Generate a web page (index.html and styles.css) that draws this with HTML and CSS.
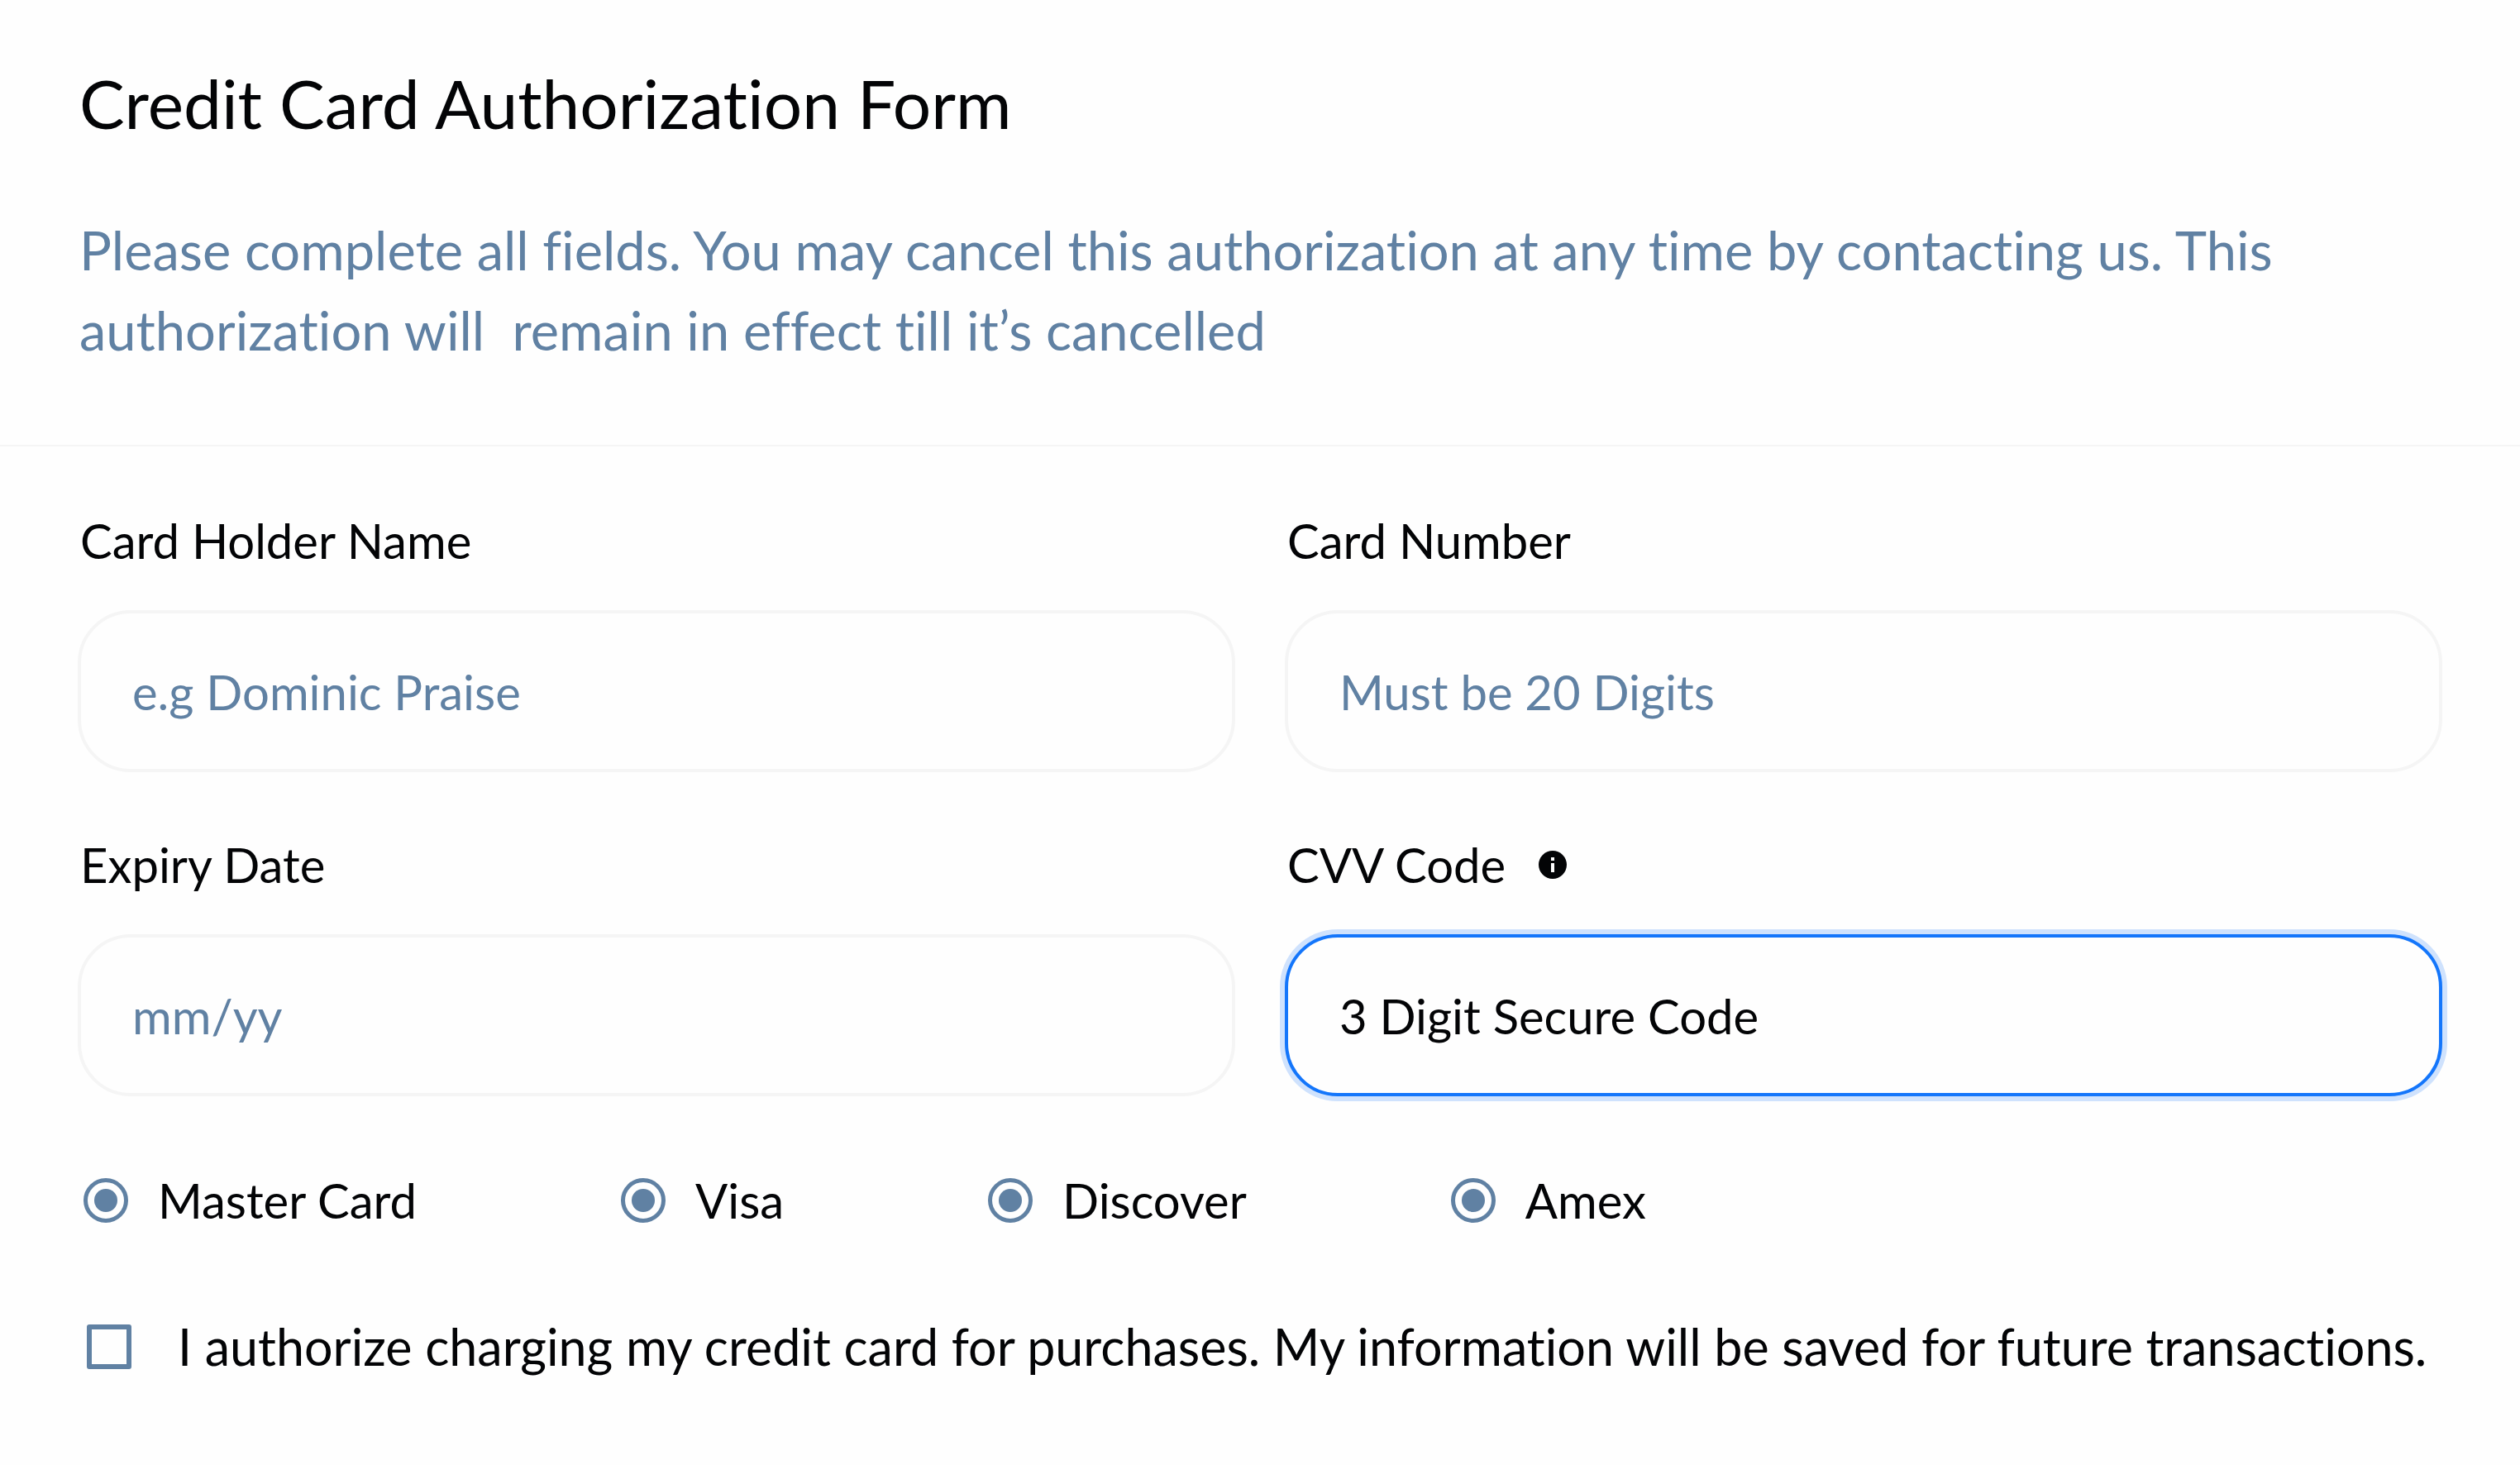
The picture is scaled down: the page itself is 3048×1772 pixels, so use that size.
FILE: index.html
```html
<!DOCTYPE html>
<html lang="en">
<head>
  <meta charset="utf-8">
  <meta name="viewport" content="width=device-width, initial-scale=1">
  <title>Credit Card Authorization Form</title>
  <link rel="stylesheet" href="styles.css">
</head>
<body>
  <main>
    <header class="intro">
      <h1 class="intro-title">Credit Card Authorization Form</h1>
      <p class="intro-text">Please complete all fields. You may cancel this authorization at any time by contacting us. This authorization will&nbsp; remain in effect till it’s cancelled</p>
    </header>

    <form class="form">
      <div class="fields">
        <div class="field">
          <div class="field-head"><label for="holder">Card Holder Name</label></div>
          <input class="field-input" id="holder" type="text" placeholder="e.g Dominic Praise">
        </div>
        <div class="field">
          <div class="field-head"><label for="number">Card Number</label></div>
          <input class="field-input" id="number" type="text" inputmode="numeric" placeholder="Must be 20 Digits">
        </div>
        <div class="field">
          <div class="field-head"><label for="expiry">Expiry Date</label></div>
          <input class="field-input" id="expiry" type="text" placeholder="mm/yy">
        </div>
        <div class="field">
          <div class="field-head">
            <label for="cvv">CVV Code</label>
            <svg class="info-icon" viewBox="0 0 34 34" aria-hidden="true">
              <circle cx="17" cy="17" r="17" fill="#030406"/>
              <path d="M15 8h4v4h-4zM15 15h4v11h-4z" fill="#fefefe"/>
            </svg>
          </div>
          <input class="field-input is-active" id="cvv" type="text" value="3 Digit Secure Code">
        </div>
      </div>

      <div class="cards">
        <label class="choice"><input class="radio" type="radio" name="mastercard" checked>Master Card</label>
        <label class="choice"><input class="radio" type="radio" name="visa" checked>Visa</label>
        <label class="choice"><input class="radio" type="radio" name="discover" checked>Discover</label>
        <label class="choice"><input class="radio" type="radio" name="amex" checked>Amex</label>
      </div>

      <label class="consent"><input class="checkbox" type="checkbox" name="consent">I authorize charging my credit card for purchases. My information will be saved for future transactions.</label>
    </form>
  </main>
</body>
</html>
```
FILE: styles.css
```css
:root {
  --ink: #030406;
  --muted: #6081a3;
  --line: #f5f5f5;
  --surface: #fefefe;
  --accent: #1476fb;
  --accent-soft: #cfe2fd;
}

* {
  box-sizing: border-box;
}

body {
  margin: 0;
  background: var(--surface);
  color: var(--ink);
  font-family: Lato, "Open Sans", sans-serif;
  font-size: 58px;
  font-variant-ligatures: none;
  line-height: 70px;
}

.intro {
  display: flex;
  flex-direction: column;
  gap: 78px;
  padding: 72px 96px 90px;
  border-bottom: 2px solid var(--line);
}

.intro-title {
  margin: 0;
  font-size: 82px;
  font-weight: 400;
  line-height: 104px;
}

.intro-text {
  margin: 0;
  color: var(--muted);
  font-size: 65px;
  line-height: 97px;
}

.form {
  padding: 79px 94px 96px;
}

.fields {
  display: grid;
  grid-template-columns: 1fr 1fr;
  gap: 77px 60px;
}

.field {
  display: flex;
  flex-direction: column;
  gap: 49px;
}

.field-head {
  display: flex;
  align-items: center;
  gap: 40px;
  padding-left: 3px;
}

.info-icon {
  width: 34px;
  height: 34px;
}

.field-input {
  width: 100%;
  height: 196px;
  padding: 0 62px;
  border: 4px solid var(--line);
  border-radius: 64px;
  outline: none;
  background: var(--surface);
  color: var(--ink);
  font: inherit;
}

.field-input::placeholder {
  color: var(--muted);
  opacity: 1;
}

.field-input.is-active,
.field-input:focus {
  border-color: var(--accent);
  box-shadow: 0 0 0 6px var(--accent-soft);
}

.cards {
  display: flex;
  flex-wrap: wrap;
  gap: 24px 247px;
  margin-top: 91px;
  padding-left: 7px;
}

.choice {
  display: flex;
  align-items: center;
  gap: 36px;
}

.radio,
.checkbox {
  flex: none;
  appearance: none;
  width: 54px;
  height: 54px;
  margin: 0;
  border: 6px solid var(--muted);
}

.radio {
  display: grid;
  place-items: center;
  border-width: 5px;
  border-radius: 50%;
}

.radio:checked::before {
  content: "";
  width: 28px;
  height: 28px;
  border-radius: 50%;
  background: var(--muted);
}

.checkbox {
  border-radius: 3px;
}

.checkbox:checked {
  background: var(--muted);
}

.consent {
  display: flex;
  align-items: center;
  gap: 56px;
  margin-top: 106px;
  padding-left: 11px;
  font-size: 61px;
  line-height: 72px;
}
```
